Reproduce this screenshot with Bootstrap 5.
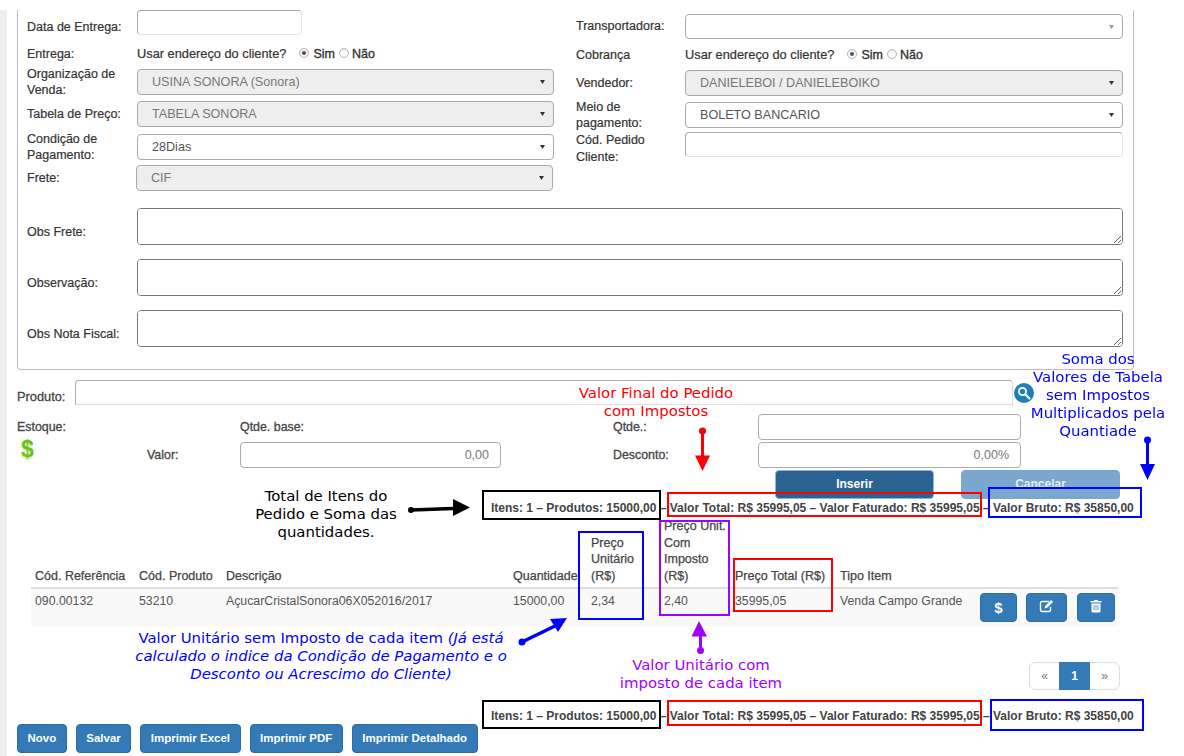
<!DOCTYPE html>
<html lang="pt-BR">
<head>
<meta charset="utf-8">
<title>Pedido</title>
<link href="https://cdn.jsdelivr.net/npm/bootstrap@5.3.0/dist/css/bootstrap.min.css" rel="stylesheet">
<style>
html,body{height:756px;overflow:hidden;background:#fff}
body{position:relative;font-family:"Liberation Sans",Arial,sans-serif;font-size:12.5px;color:#333;line-height:16.5px}
.moldura{margin-top:10px;border-left:7px solid #eeeeee;padding-left:10px;height:746px}
.quadro{width:1117px;height:360px;border:1px solid #b9bdcb;border-top:0;border-radius:0 0 4px 4px;padding-left:9px;padding-right:9px}
.metade-e{width:549px}
.metade-d{width:548px;margin-left:0}
.campo{display:flex;align-items:center;height:26px}
.rot{width:110px;flex:none;font-size:12.5px;color:#333;margin:0;-webkit-text-stroke:.2px #333}
.rot-d{width:109px}
.rot-baixo9{margin-top:9px}
.rot-baixo8{margin-top:8px}
.rot-baixo11{margin-top:11px}
.ctl.form-control,.ctl.form-select{font-size:12.6px;color:#555;border-radius:4px;padding:0 24px 0 14px;height:26px;min-height:0;line-height:24px;box-shadow:none}
.ctl.form-control{border:1px solid #e4e4e4;border-top-color:#aaa;border-left-color:#aaa;padding:0 10px}
.ctl.form-select{border:1px solid #a9a9a9;background-size:9px 6px;background-position:right 6px center;background-image:url("data:image/svg+xml,%3Csvg xmlns='http://www.w3.org/2000/svg' viewBox='0 0 9 6'%3E%3Cpath d='M2 1h5L4.500 5z' fill='%23333'/%3E%3C/svg%3E")}
.ctl.form-select:disabled{background-color:#eeeeee;color:#777}
.ctl.sel-vazia{background-image:url("data:image/svg+xml,%3Csvg xmlns='http://www.w3.org/2000/svg' viewBox='0 0 9 6'%3E%3Cpath d='M2 1h5L4.500 5z' fill='%23999'/%3E%3C/svg%3E")}
.ctl.alt25{height:25px}
.larg-data{width:165px}
.larg-e{width:417px}
.larg-d{width:438px}
.frete-sel{margin-left:-1px}
.linha-25{height:25px}
.espa-a{margin-top:4px}
.espa-b{margin-top:10px;height:18px}
.espa-b2{margin-top:7px;height:18px}
.espa-c{margin-top:6px}
.espa-d{margin-top:6px}
.espa-e{margin-top:7px}
.espa-f{margin-top:5px}
.espa-g{margin-top:4px}
.espa-h{margin-top:17px;height:37px}
.espa-i{margin-top:14px;height:37px}
.pergunta{color:#333;font-size:12.8px;display:flex;align-items:center;-webkit-text-stroke:.2px #333}
.radio-fake{width:10px;height:10px;border-radius:50%;border:1px solid #b5b5b5;background:linear-gradient(#eee,#fff);display:inline-block;margin:-3px 3px 0 4px;position:relative}
.radio-on{margin-left:13px;margin-right:4px}
.radio-on::after{content:"";position:absolute;left:2px;top:2px;width:4px;height:4px;border-radius:50%;background:#555}
.forte{font-weight:400;font-size:12.5px;-webkit-text-stroke:.35px #333}
.caixa-obs.form-control{width:986px;height:37px;min-height:0;border:1px solid #767676;border-radius:4px;resize:both;box-shadow:none}
.linha-produto{margin-top:10px;width:1040px;height:25px}
.rot-produto{width:58px;flex:none;margin:9px 0 0;color:#444;font-size:12.8px;-webkit-text-stroke:.3px #444}
.ctl-produto.form-control{width:938px;height:25px;min-height:0;border:1px solid #aaa;border-bottom-color:#ddd;border-right-color:#ddd;border-radius:4px 4px 0 0;box-shadow:none}
.lupa{width:20px;height:20px;margin:3px 0 0 1px;flex:none}
.grade-valor{display:grid;grid-template-columns:130px 93px 261px 112px 145px 263px;grid-template-rows:26px 26px;row-gap:2px;margin-top:9px}
.rv{color:#444;align-self:center;font-size:12.4px;-webkit-text-stroke:.3px #444}
.v2{grid-column:2}.v3{grid-column:3}.v5{grid-column:5}.v6{grid-column:6}.v1{grid-column:1}
.num.form-control{height:26px;min-height:0;border:1px solid #aaa;border-radius:4px;text-align:right;font-size:12.5px;color:#777;padding:0 11px;box-shadow:none}
.cifrao{color:#6cc314;font-weight:700;font-size:23px;line-height:20px;padding-left:4px;margin-top:-3px;text-shadow:0 2px 2px #cfe9b4;align-self:start}
.linha-acao{width:1103px;height:29px;margin-top:2px;gap:27px}
.bt-larga.btn{width:159px;height:29px;padding:0;border-radius:4px;font-size:12px;font-weight:700;color:#fff;line-height:27px}
.bt-ins.btn{background:#2a6292;border:1px solid #8ab4e6}
.bt-can.btn{background:#7ba7cf;border:1px solid #7ba7cf;opacity:1;color:#e4edf5}
.totais{padding-left:474px;font-weight:700;color:#444;font-size:12px;line-height:16px;white-space:nowrap}
.topo-total{margin-top:1px}
.base-total{margin-top:18px}
.tab-pedido{width:1087px;margin:2px 0 0 14px;table-layout:fixed;font-size:12.3px;color:#444;--bs-table-bg:transparent;--bs-table-color:#444}
.tab-pedido th{padding:0 4px 3px;font-weight:400;vertical-align:bottom;border-bottom:2px solid #ddd;color:#444;font-size:12.5px;-webkit-text-stroke:.25px #444}
.tab-pedido td{padding:4px 4px 0;height:38px;vertical-align:top;background:#f9f9f9;border:0;box-shadow:none;color:#555}
.tab-pedido td.acoes{padding:4px 3px 0 4px}
.c1{width:104px}.c2{width:87px}.c3{width:287px}.c4{width:78px}.c5{width:73px}.c6{width:71px}.c7{width:105px}.c8{width:140px}.c9{width:142px}
.bt-azul.btn{background:#337ab7;border:1px solid #2e6da4;color:#fff;font-size:11.5px;font-weight:700;border-radius:4px;height:29px;padding:0;line-height:27px}
.ba{width:37px}.bb{width:41px;margin-left:9px}.bc{width:38px;margin-left:10px}
.bt-azul svg{vertical-align:-2px}
.bt-azul .sifra{font-size:15px}
.pag-wrap{width:1103px;margin-top:36px;height:28px}
.paginas{margin:0}
.paginas .page-link{width:31px;height:28px;padding:0;line-height:26px;text-align:center;color:#777;border-color:#ddd;font-size:12px;background:#fff}
.paginas .active .page-link{background:#337ab7;border-color:#337ab7;color:#fff;font-weight:700}
.rodape{gap:9px;margin-top:0}
.rodape .btn.bt-azul{height:29px;padding:0 9.500px;line-height:27px}
/* anotações sobre a tela */
.anota{position:absolute;font-family:"DejaVu Sans",sans-serif;font-size:14.9px;line-height:18px;text-align:center;white-space:nowrap;margin:0}
.n-soma{left:1018px;width:160px;top:350px;color:#00f}
.n-final{left:556px;width:200px;top:384px;color:#f00}
.n-itens{left:226px;width:200px;top:487px;color:#000}
.n-unit{left:101px;width:440px;top:629px;color:#00f}
.n-imp{left:601px;width:200px;top:656px;color:#a000ff}
.caixa{position:absolute;border:2px solid;pointer-events:none}
.cx-preto{border-color:#000}.cx-verm{border-color:#f00}.cx-azul{border-color:#00f}.cx-roxo{border-color:#a000ff}
.k1{left:482px;top:490px;width:179px;height:30px}
.k2{left:667px;top:492px;width:315px;height:25px}
.k3{left:988px;top:487px;width:154px;height:31px}
.k4{left:578px;top:531px;width:66px;height:89px}
.k5{left:659px;top:520px;width:71px;height:96px}
.k6{left:733px;top:558px;width:100px;height:54px}
.k7{left:482px;top:700px;width:179px;height:29px}
.k8{left:667px;top:700px;width:315px;height:26px}
.k9{left:990px;top:699px;width:154px;height:32px}
.setas{position:absolute;left:0;top:0;width:1184px;height:756px;pointer-events:none}
</style>
</head>
<body>
<div class="moldura">
  <div class="quadro">
    <div class="d-flex">
      <div class="metade-e">
        <div class="campo linha-25"><label class="rot rot-baixo9">Data de Entrega:</label><input class="form-control ctl alt25 larg-data" type="text"></div>
        <div class="campo espa-b"><span class="rot">Entrega:</span><span class="pergunta">Usar endereço do cliente?<span class="radio-fake radio-on"></span><span class="forte">Sim</span><span class="radio-fake"></span><span class="forte">Não</span></span></div>
        <div class="campo espa-c"><label class="rot">Organização de Venda:</label><select class="form-select ctl larg-e" disabled><option>USINA SONORA (Sonora)</option></select></div>
        <div class="campo espa-d"><label class="rot">Tabela de Preço:</label><select class="form-select ctl larg-e" disabled><option>TABELA SONORA</option></select></div>
        <div class="campo espa-e"><label class="rot">Condição de Pagamento:</label><select class="form-select ctl larg-e"><option>28Dias</option></select></div>
        <div class="campo espa-f"><label class="rot">Frete:</label><select class="form-select ctl larg-e frete-sel" disabled><option>CIF</option></select></div>
      </div>
      <div class="metade-d">
        <div class="campo espa-a linha-25"><label class="rot rot-d">Transportadora:</label><select class="form-select ctl sel-vazia alt25 larg-d"><option></option></select></div>
        <div class="campo espa-b2"><span class="rot rot-d">Cobrança</span><span class="pergunta">Usar endereço do cliente?<span class="radio-fake radio-on"></span><span class="forte">Sim</span><span class="radio-fake"></span><span class="forte">Não</span></span></div>
        <div class="campo espa-c"><label class="rot rot-d">Vendedor:</label><select class="form-select ctl larg-d" disabled><option>DANIELEBOI / DANIELEBOIKO</option></select></div>
        <div class="campo espa-d"><label class="rot rot-d">Meio de pagamento:</label><select class="form-select ctl larg-d"><option>BOLETO BANCARIO</option></select></div>
        <div class="campo espa-g linha-25"><label class="rot rot-d rot-baixo8">Cód. Pedido Cliente:</label><input class="form-control ctl alt25 larg-d" type="text"></div>
      </div>
    </div>
    <div class="campo espa-h"><label class="rot rot-baixo11">Obs Frete:</label><textarea class="form-control caixa-obs"></textarea></div>
    <div class="campo espa-i"><label class="rot rot-baixo11">Observação:</label><textarea class="form-control caixa-obs"></textarea></div>
    <div class="campo espa-i"><label class="rot rot-baixo11">Obs Nota Fiscal:</label><textarea class="form-control caixa-obs"></textarea></div>
  </div>

  <div class="d-flex linha-produto">
    <label class="rot-produto">Produto:</label>
    <input class="form-control ctl-produto" type="text">
    <svg class="lupa" viewBox="0 0 20 20"><circle cx="10" cy="10" r="10" fill="#1f7fb8"/><circle cx="8.500" cy="8.500" r="3.600" fill="#1f7fb8" stroke="#fff" stroke-width="1.700"/><path d="M11.300 11.300L15.500 15.500" stroke="#e8f2f8" stroke-width="2.400" stroke-linecap="round"/></svg>
  </div>

  <div class="grade-valor">
    <span class="rv v1">Estoque:</span>
    <span class="rv v3">Qtde. base:</span>
    <span class="rv v5">Qtde.:</span>
    <input class="form-control num v6" type="text">
    <span class="cifrao v1">$</span>
    <span class="rv v2">Valor:</span>
    <input class="form-control num v3" type="text" value="0,00">
    <span class="rv v5">Desconto:</span>
    <input class="form-control num v6" type="text" value="0,00%">
  </div>

  <div class="d-flex justify-content-end linha-acao">
    <button type="button" class="btn bt-larga bt-ins">Inserir</button>
    <button type="button" class="btn bt-larga bt-can" disabled>Cancelar</button>
  </div>

  <div class="totais topo-total">Itens: 1 – Produtos: 15000,00 – Valor Total: R$ 35995,05 – Valor Faturado: R$ 35995,05 – Valor Bruto: R$ 35850,00</div>

  <table class="table tab-pedido mb-0">
    <colgroup><col class="c1"><col class="c2"><col class="c3"><col class="c4"><col class="c5"><col class="c6"><col class="c7"><col class="c8"><col class="c9"></colgroup>
    <thead><tr><th>Cód. Referência</th><th>Cód. Produto</th><th>Descrição</th><th>Quantidade</th><th>Preço Unitário (R$)</th><th>Preço Unit. Com Imposto (R$)</th><th>Preço Total (R$)</th><th>Tipo Item</th><th></th></tr></thead>
    <tbody><tr><td>090.00132</td><td>53210</td><td>AçucarCristalSonora06X052016/2017</td><td>15000,00</td><td>2,34</td><td>2,40</td><td>35995,05</td><td>Venda Campo Grande</td>
      <td class="acoes"><button type="button" class="btn bt-azul ba"><span class="sifra">$</span></button><button type="button" class="btn bt-azul bb"><svg width="15" height="14" viewBox="0 0 15 14"><path d="M10 2.500H3a1.500 1.500 0 0 0-1.500 1.500v7A1.500 1.500 0 0 0 3 12.500h7a1.500 1.500 0 0 0 1.500-1.500V8" fill="none" stroke="#fff" stroke-width="1.400"/><path d="M5.500 9.500l.7-2.600L12.200 1l1.900 1.900-6 5.900z" fill="#fff"/></svg></button><button type="button" class="btn bt-azul bc"><svg width="12" height="14" viewBox="0 0 12 14"><path d="M4 2V1h4v1h3.500v1.500H.5V2z" fill="#fff"/><path d="M1.500 4.500h9V12a1.500 1.500 0 0 1-1.500 1.500H3A1.500 1.500 0 0 1 1.500 12z" fill="#fff"/><path d="M4 6v5.500M6 6v5.500M8 6v5.500" stroke="#337ab7" stroke-width=".7"/></svg></button></td></tr></tbody>
  </table>

  <nav class="d-flex justify-content-end pag-wrap" aria-label="Paginação">
    <ul class="pagination paginas">
      <li class="page-item disabled"><a class="page-link" href="#">«</a></li>
      <li class="page-item active"><a class="page-link" href="#">1</a></li>
      <li class="page-item disabled"><a class="page-link" href="#">»</a></li>
    </ul>
  </nav>

  <div class="totais base-total">Itens: 1 – Produtos: 15000,00 – Valor Total: R$ 35995,05 – Valor Faturado: R$ 35995,05 – Valor Bruto: R$ 35850,00</div>

  <div class="d-flex rodape">
    <button type="button" class="btn bt-azul">Novo</button>
    <button type="button" class="btn bt-azul">Salvar</button>
    <button type="button" class="btn bt-azul">Imprimir Excel</button>
    <button type="button" class="btn bt-azul">Imprimir PDF</button>
    <button type="button" class="btn bt-azul">Imprimir Detalhado</button>
  </div>
</div>

<div class="caixa cx-preto k1"></div><div class="caixa cx-verm k2"></div><div class="caixa cx-azul k3"></div>
<div class="caixa cx-azul k4"></div><div class="caixa cx-roxo k5"></div><div class="caixa cx-verm k6"></div>
<div class="caixa cx-preto k7"></div><div class="caixa cx-verm k8"></div><div class="caixa cx-azul k9"></div>

<p class="anota n-soma">Soma dos<br>Valores de Tabela<br>sem Impostos<br>Multiplicados pela<br>Quantiade</p>
<p class="anota n-final">Valor Final do Pedido<br>com Impostos</p>
<p class="anota n-itens">Total de Itens do<br>Pedido e Soma das<br>quantidades.</p>
<p class="anota n-unit">Valor Unitário sem Imposto de cada item <em>(Já está<br>calculado o indice da Condição de Pagamento e o<br>Desconto ou Acrescimo do Cliente)</em></p>
<p class="anota n-imp">Valor Unitário com<br>imposto de cada item</p>

<svg class="setas" viewBox="0 0 1184 756">
  <g fill="#000" stroke="#000"><circle cx="411" cy="510" r="3" stroke="none"/><path d="M411 510L453 508.500" stroke-width="3.500" fill="none"/><path d="M453 499L470 507.500L453 516z" stroke="none"/></g>
  <g fill="#f00" stroke="#f00"><circle cx="702.500" cy="431" r="3.500" stroke="none"/><path d="M702.500 431V456" stroke-width="3" fill="none"/><path d="M695 455.500H710L702.500 471z" stroke="none"/></g>
  <g fill="#00f" stroke="#00f"><circle cx="1147.500" cy="440" r="3.500" stroke="none"/><path d="M1147.500 440V465" stroke-width="3" fill="none"/><path d="M1140 464H1155L1147.500 480z" stroke="none"/></g>
  <g fill="#00f" stroke="#00f"><circle cx="522" cy="642" r="3.500" stroke="none"/><path d="M522 642L555 626" stroke-width="3.500" fill="none"/><path d="M550 619L567 618L558 632z" stroke="none"/></g>
  <g fill="#a000ff" stroke="#a000ff"><circle cx="700.500" cy="650.500" r="3.500" stroke="none"/><path d="M700.500 650V635" stroke-width="3" fill="none"/><path d="M699 621L707 636.500H691.500z" stroke="none"/></g>
</svg>
<script src="https://cdn.jsdelivr.net/npm/bootstrap@5.3.0/dist/js/bootstrap.bundle.min.js"></script>
</body>
</html>
